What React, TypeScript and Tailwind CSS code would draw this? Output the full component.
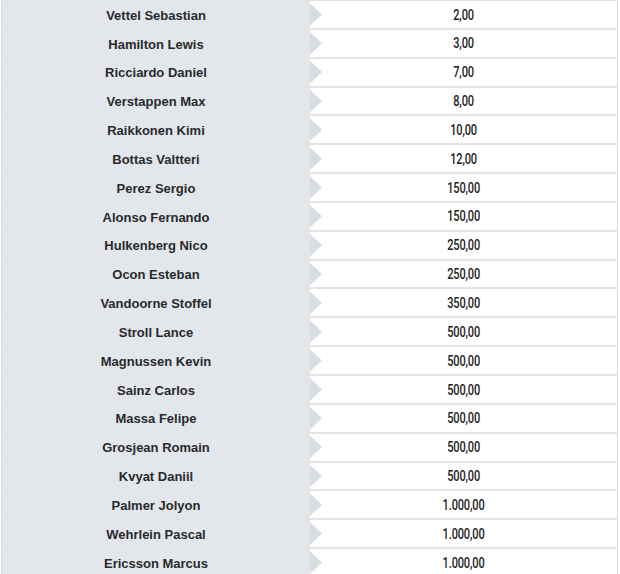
import React from "react";

const drivers = [
  { name: "Vettel Sebastian", odds: "2,00" },
  { name: "Hamilton Lewis", odds: "3,00" },
  { name: "Ricciardo Daniel", odds: "7,00" },
  { name: "Verstappen Max", odds: "8,00" },
  { name: "Raikkonen Kimi", odds: "10,00" },
  { name: "Bottas Valtteri", odds: "12,00" },
  { name: "Perez Sergio", odds: "150,00" },
  { name: "Alonso Fernando", odds: "150,00" },
  { name: "Hulkenberg Nico", odds: "250,00" },
  { name: "Ocon Esteban", odds: "250,00" },
  { name: "Vandoorne Stoffel", odds: "350,00" },
  { name: "Stroll Lance", odds: "500,00" },
  { name: "Magnussen Kevin", odds: "500,00" },
  { name: "Sainz Carlos", odds: "500,00" },
  { name: "Massa Felipe", odds: "500,00" },
  { name: "Grosjean Romain", odds: "500,00" },
  { name: "Kvyat Daniil", odds: "500,00" },
  { name: "Palmer Jolyon", odds: "1.000,00" },
  { name: "Wehrlein Pascal", odds: "1.000,00" },
  { name: "Ericsson Marcus", odds: "1.000,00" },
];

const App = () => {
  return (
    <div className="w-[620px] h-[574px] overflow-hidden bg-white">
      <div className="ml-px w-[617px] border-t border-[#e2e2e2]">
        {drivers.map((d) => (
          <div key={d.name} className="flex h-[28.85px] border-b-2 border-[#e4e4e4]">
            {/* name cell with arrow */}
            <div className="relative w-[309px] flex items-center justify-center bg-[#e3e6ea] border-l border-[#d8d8d8]">
              <span className="font-['Liberation_Sans',Arial,sans-serif] font-bold text-[13px] text-[#2a2a2a] pt-[2px]">
                {d.name}
              </span>
              <div className="absolute left-full top-0 h-full w-[12px] bg-[#d9dce1] [clip-path:polygon(0_8%,100%_50%,0_92%)]" />
            </div>
            {/* odds cell */}
            <div className="flex-1 flex items-center justify-center border-r border-[#d8d8d8]">
              <span className="inline-block font-['Roboto',sans-serif] font-medium text-[14.5px] text-[#222] scale-x-[0.76] tracking-[-0.2px] pt-[2px]">
                {d.odds}
              </span>
            </div>
          </div>
        ))}
      </div>
    </div>
  );
};

export default App;
